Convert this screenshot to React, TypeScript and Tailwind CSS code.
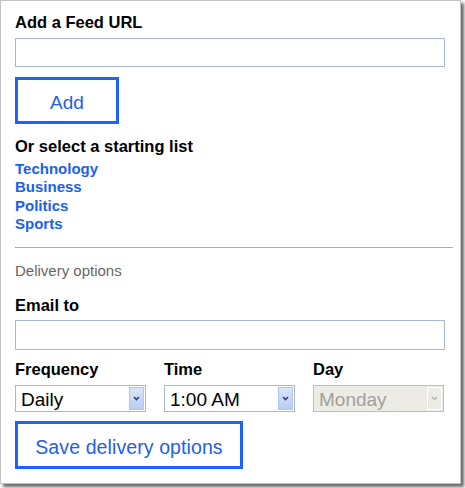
import React from "react";

const font = "font-['Liberation_Sans',Arial,sans-serif]";

const Chevron = ({ disabled }: { disabled?: boolean }) => (
  <svg width="7" height="5" viewBox="0 0 7 5">
    <path
      d="M1 1 L3.5 3.5 L6 1"
      fill="none"
      stroke={disabled ? "#b9b9b9" : "#2a3f73"}
      strokeWidth="1.6"
    />
  </svg>
);

const FakeSelect = ({ value, disabled }: { value: string; disabled?: boolean }) => (
  <div
    className={`flex h-[27px] w-[131px] items-stretch border ${
      disabled ? "border-[#b7c1cc] bg-[#ecebe6] text-[#a3a097]" : "border-[#a5b9d1] bg-white text-black"
    }`}
  >
    <div className="flex flex-1 items-center pl-[5px] pt-px text-[19px] leading-none">{value}</div>
    <div
      className={`m-px flex w-[15px] items-center justify-center border ${
        disabled
          ? "border-white bg-[#ecebe6]"
          : "border-[#b4c6ec] bg-gradient-to-b from-[#dbe5fb] to-[#b9ccf2]"
      }`}
    >
      <Chevron disabled={disabled} />
    </div>
  </div>
);

export default function App() {
  return (
    <div className={`h-[488px] w-[465px] bg-white ${font}`}>
      <div className="flex h-[484px] w-[461px] flex-col border border-[#c4c4c4] bg-white px-[14px] pb-[13px] pt-[11px] shadow-[3px_3px_3px_rgba(0,0,0,0.6)]">
        <h2 className="text-[16.5px] font-bold leading-[20px] text-black">Add a Feed URL</h2>
        <input className="mt-[6px] h-[29px] w-[430px] border border-[#a5b9d1] outline-none" />
        <button className="mt-[10px] h-[47px] w-[104px] border-[3px] border-[#1b64f5] pt-[5px] text-[19px] text-[#2161e8]">
          Add
        </button>

        <h2 className="mt-[12px] text-[16.5px] font-bold leading-[20px] text-black">
          Or select a starting list
        </h2>
        <ul className="mt-[4px] text-[15px] font-bold leading-[18.3px] text-[#1a60f0]">
          <li>Technology</li>
          <li>Business</li>
          <li>Politics</li>
          <li>Sports</li>
        </ul>

        <hr className="mt-[14px] w-[438px] border-t border-[#ababab]" />

        <p className="mt-[14px] text-[15px] leading-[18.3px] text-[#666666]">Delivery options</p>

        <h2 className="mt-[15px] text-[16.5px] font-bold leading-[20px] text-black">Email to</h2>
        <input className="mt-[5px] h-[30px] w-[430px] border border-[#a5b9d1] outline-none" />

        <div className="mt-[9px] flex gap-[18px]">
          <div className="flex flex-col">
            <span className="text-[16.5px] font-bold leading-[20px]">Frequency</span>
            <div className="mt-[6px]">
              <FakeSelect value="Daily" />
            </div>
          </div>
          <div className="flex flex-col">
            <span className="text-[16.5px] font-bold leading-[20px]">Time</span>
            <div className="mt-[6px]">
              <FakeSelect value="1:00 AM" />
            </div>
          </div>
          <div className="flex flex-col">
            <span className="text-[16.5px] font-bold leading-[20px]">Day</span>
            <div className="mt-[6px]">
              <FakeSelect value="Monday" disabled />
            </div>
          </div>
        </div>

        <button className="mt-[9px] h-[48px] w-[228px] border-[3px] border-[#1b64f5] pt-[4px] text-[19.5px] tracking-[0.1px] text-[#2161e8]">
          Save delivery options
        </button>
      </div>
    </div>
  );
}
